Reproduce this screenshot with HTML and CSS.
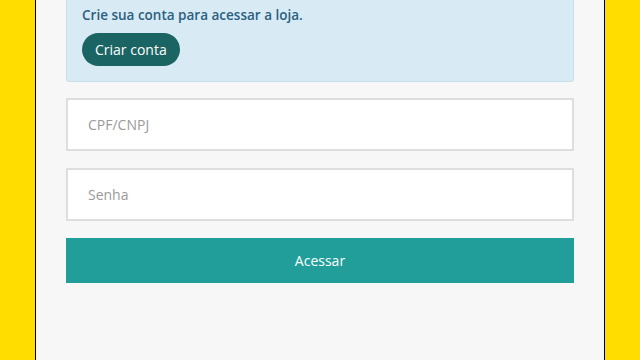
FILE: index.html
```html
<!DOCTYPE html>
<html lang="pt-BR">

<head>
    <meta charset="UTF-8">
    <meta name="viewport" content="width=device-width, initial-scale=1.0">
    <title>Login</title>
    <link rel="stylesheet" href="styles.css">
</head>

<body>
    <div class="login">
        <div class="first-access">
            <h4 class="first-title">Primeiro acesso?</h4>
            <p class="first-text">Crie sua conta para acessar a loja.</p>
            <button class="btn-create">Criar conta</button>
        </div>
        <form class="login-form">
            <input type="text" class="field" placeholder="CPF/CNPJ">
            <input type="password" class="field" placeholder="Senha">
            <button type="button" class="btn-submit">Acessar</button>
        </form>
    </div>
</body>

</html>
```

FILE: styles.css
```css
body,
h4,
p {
    margin: 0;
    padding: 0;
}

button,
input {
    font-family: "Open Sans", sans-serif;
    outline: none;
}

body {
    background-color: #ffdd00;
    font-family: "Open Sans", sans-serif;
    font-size: 14px;
    line-height: 20px;
}

.login {
    box-sizing: border-box;
    width: 570px;
    height: 360px;
    margin: 0 auto;
    padding: 0 30px;
    border-left: 1px solid #000;
    border-right: 1px solid #000;
    background-color: #f7f7f8;
    overflow: hidden;
}

.first-access {
    margin-top: -22px;
    padding: 6px 15px 15px;
    border: 1px solid #c6dfea;
    border-radius: 3px;
    background-color: #d8ebf5;
}

.first-title {
    font-size: 14px;
    font-weight: 600;
    color: #7d9aab;
}

.first-text {
    font-size: 13.5px;
    font-weight: 600;
    color: #2a6080;
}

.btn-create {
    display: block;
    margin-top: 8px;
    padding: 0 13px;
    height: 33px;
    border: none;
    border-radius: 17px;
    font-size: 14px;
    color: #fff;
    background-color: #1b6464;
}

.login-form {
    display: flex;
    flex-direction: column;
    gap: 17px;
    margin-top: 16px;
}

.field {
    box-sizing: border-box;
    width: 100%;
    height: 53px;
    padding: 0 20px;
    border: 2px solid #dedede;
    font-size: 14px;
    color: #555;
    background-color: #fff;
}

.field::placeholder {
    color: #9a9a9a;
}

.btn-submit {
    height: 45px;
    border: none;
    font-size: 14px;
    color: #fff;
    background-color: #219e99;
}
```
